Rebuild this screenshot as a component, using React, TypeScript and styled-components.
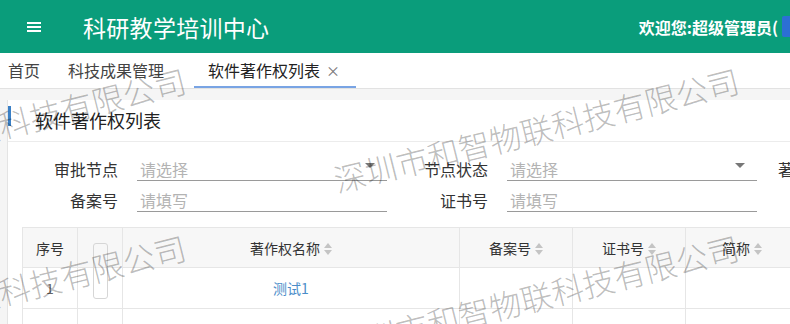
import React from 'react'
import styled, { createGlobalStyle } from 'styled-components'

const GREEN = '#0a9d7b'
const TEXT = '#333'
const BORDER = '#e6e6e6'
const WATERMARK = '深圳市和智物联科技有限公司'

const GlobalStyle = createGlobalStyle`
	body {
		margin: 0;
		overflow: hidden;
		background: #fff;
		font-family: "Noto Sans CJK SC", "Microsoft YaHei", "Liberation Sans", sans-serif;
		color: ${TEXT};
	}
`

const tabs = [
	{ title: '首页' },
	{ title: '科技成果管理' },
	{ title: '软件著作权列表', active: true }
]

const fields = [
	{ label: '审批节点', placeholder: '请选择', select: true },
	{ label: '节点状态', placeholder: '请选择', select: true },
	{ label: '著作权名称', placeholder: '请填写' },
	{ label: '备案号', placeholder: '请填写' },
	{ label: '证书号', placeholder: '请填写' },
	{ label: '简称', placeholder: '请填写' }
]

const columns = [
	{ title: '序号', width: 55 },
	{ title: '', width: 45, check: true },
	{ title: '著作权名称', width: 337, sort: true },
	{ title: '备案号', width: 113, sort: true },
	{ title: '证书号', width: 113, sort: true },
	{ title: '简称', width: 113, sort: true },
	{ title: '操作', width: 160 }
]

// centres of the tiled watermark, page coordinates
const marks = [
	[-17, 129],
	[536, 129],
	[-17, 296],
	[536, 296]
]

const SortIcon = () => (
	<SSort width="8" height="14" viewBox="0 0 8 14">
		<path d="M0 6 L4 1 L8 6 Z" fill="#c4c4c4" />
		<path d="M0 8 L8 8 L4 13 Z" fill="#c4c4c4" />
	</SSort>
)

const MenuIcon = () => (
	<svg width="14" height="12" viewBox="0 0 14 12">
		<rect x="0" y="1" width="14" height="2" fill="#fff" />
		<rect x="0" y="5" width="14" height="2" fill="#fff" />
		<rect x="0" y="9" width="14" height="2" fill="#fff" />
	</svg>
)

const App = () => {
	return (
		<Page>
			<GlobalStyle />
			<Header>
				<MenuIcon />
				<Brand>科研教学培训中心</Brand>
				<User>
					欢迎您:超级管理员(
					<UserBadge>admin</UserBadge>)
				</User>
			</Header>
			<TabBar>
				{tabs.map(t => (
					<Tab key={t.title} $active={t.active}>
						{t.title}
						{t.active && <Close>×</Close>}
					</Tab>
				))}
			</TabBar>
			<Main>
				<Card>
					<CardHeader>
						<Accent />
						<CardTitle>软件著作权列表</CardTitle>
					</CardHeader>
					<Form>
						{fields.map(f => (
							<FormItem key={f.label}>
								<Label>{f.label}</Label>
								<Field>
									{f.placeholder}
									{f.select && <Caret />}
								</Field>
							</FormItem>
						))}
					</Form>
					<Table>
						<colgroup>
							{columns.map((c, i) => (
								<col key={i} style={{ width: c.width }} />
							))}
						</colgroup>
						<thead>
							<tr>
								{columns.map((c, i) => (
									<Th key={i}>
										{c.title}
										{c.sort && <SortIcon />}
										{c.check && <CheckBox />}
									</Th>
								))}
							</tr>
						</thead>
						<tbody>
							<tr>
								<Td>1</Td>
								<Td />
								<Td><Link>测试1</Link></Td>
								<Td />
								<Td />
								<Td />
								<Td />
							</tr>
							<tr>
								<Td>2</Td>
								<Td />
								<Td />
								<Td />
								<Td />
								<Td />
								<Td />
							</tr>
						</tbody>
					</Table>
				</Card>
			</Main>
			<Watermarks>
				{marks.map(([x, y], i) => (
					<Mark key={i} style={{ left: x - 208, top: y - 16 }}>{WATERMARK}</Mark>
				))}
			</Watermarks>
		</Page>
	)
}

const Page = styled.div`
	position: relative;
	width: 1000px;
	min-height: 324px;
	overflow: hidden;
`
const Header = styled.header`
	position: relative;
	z-index: 2;
	display: flex;
	align-items: center;
	height: 53px;
	padding-left: 27px;
	background: ${GREEN};
	color: #fff;
`
const Brand = styled.div`
	margin-left: 42px;
	font-size: 23px;
	letter-spacing: 0.3px;
`
const User = styled.div`
	display: flex;
	align-items: center;
	margin-left: auto;
	margin-right: 112px;
	font-size: 16px;
	font-weight: 700;
`
const UserBadge = styled.span`
	display: inline-block;
	width: 96px;
	height: 21px;
	margin: 0 4px 0 4px;
	background: #2c6fd5;
	border-radius: 2px;
	font-weight: 400;
	font-size: 13px;
	line-height: 21px;
	text-align: center;
`
const TabBar = styled.nav`
	display: flex;
	height: 35px;
	padding-left: 8px;
	border-bottom: 1px solid #e2e2e2;
	background: #fff;
`
const Tab = styled.div<{ $active?: boolean }>`
	display: flex;
	align-items: center;
	height: 33px;
	font-size: 16px;
	color: ${p => (p.$active ? '#222' : '#444')};
	margin: ${p => (p.$active ? '0 0 0 2px' : '0 28px 0 0')};
	padding: ${p => (p.$active ? '0 16px 0 14px' : '0')};
	border-bottom: 2px solid ${p => (p.$active ? '#79a4e4' : 'transparent')};
`
const Close = styled.span`
	margin-left: 6px;
	font-size: 14px;
	color: #777;
`
const Main = styled.main`
	padding: 11px 0 0 7px;
	background: #f5f5f5;
`
const Card = styled.section`
	background: #fff;
	border-left: 1px solid #e4e4e4;
	min-height: 240px;
`
const CardHeader = styled.div`
	display: flex;
	align-items: flex-start;
	height: 41px;
	border-bottom: 1px solid #ececec;
`
const Accent = styled.span`
	width: 3px;
	height: 20px;
	margin-top: 6px;
	background: #3b80c6;
`
const CardTitle = styled.h2`
	margin: 0 0 0 24px;
	font-size: 18px;
	font-weight: 400;
	line-height: 41px;
	color: #222;
`
const Form = styled.div`
	display: grid;
	grid-template-columns: repeat(3, 370px);
	padding: 8px 0 0 10px;
`
const FormItem = styled.div`
	display: flex;
	height: 31px;
`
const Label = styled.label`
	width: 100px;
	padding-top: 8px;
	line-height: 22px;
	font-size: 16px;
	text-align: right;
	color: ${TEXT};
`
const Field = styled.div`
	display: flex;
	justify-content: space-between;
	box-sizing: border-box;
	width: 250px;
	height: 31px;
	margin-left: 19px;
	padding: 8px 0 0 3px;
	line-height: 22px;
	font-size: 16px;
	color: #b3b3b3;
	border-bottom: 1px solid #9a9a9a;
`
const Caret = styled.span`
	width: 0;
	height: 0;
	margin: 5px 12px 0 0;
	border-left: 5px solid transparent;
	border-right: 5px solid transparent;
	border-top: 5px solid #777;
`
const Table = styled.table`
	margin: 15px 0 0 14px;
	border-collapse: collapse;
	table-layout: fixed;
	font-size: 14px;
`
const Th = styled.th`
	position: relative;
	height: 39px;
	padding: 0;
	background: #f7f7f7;
	border: 1px solid ${BORDER};
	font-weight: 400;
	color: ${TEXT};
	text-align: center;
	white-space: nowrap;
`
const Td = styled.td`
	height: 40px;
	padding: 0;
	border: 1px solid ${BORDER};
	text-align: center;
	color: #666;
`
const SSort = styled.svg`
	margin-left: 4px;
	vertical-align: -2px;
`
const CheckBox = styled.span`
	position: absolute;
	z-index: 1;
	top: 15px;
	left: 15px;
	width: 13px;
	height: 54px;
	border: 1px solid #d6d6d6;
	border-radius: 3px;
`
const Link = styled.a`
	color: #4a8dc9;
	cursor: pointer;
`
const Watermarks = styled.div`
	position: absolute;
	inset: 0;
	z-index: 1;
	pointer-events: none;
	overflow: hidden;
`
const Mark = styled.span`
	position: absolute;
	width: 416px;
	font-size: 32px;
	line-height: 32px;
	font-weight: 300;
	white-space: nowrap;
	color: rgba(0, 0, 0, 0.27);
	transform: rotate(-14deg);
`

export default App
